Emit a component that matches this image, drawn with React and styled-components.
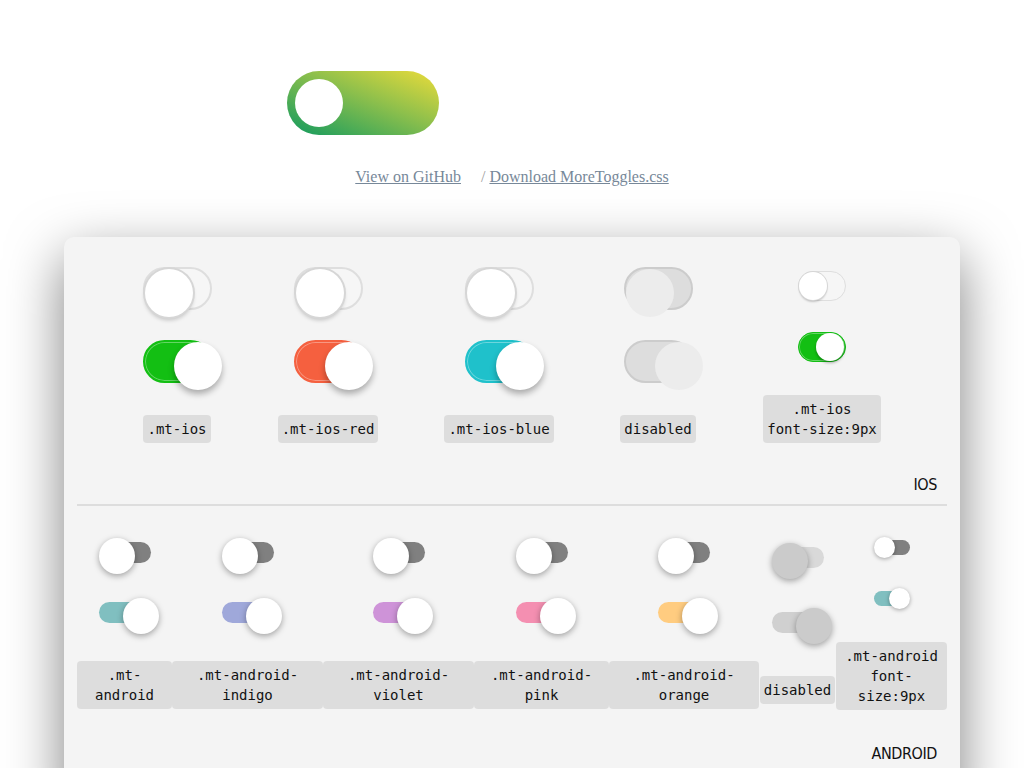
import React from 'react';
import styled, { createGlobalStyle } from 'styled-components';

const GlobalStyle = createGlobalStyle`
  html, body { margin: 0; padding: 0; background: #fff; }
  body { font-family: "Liberation Serif", "Times New Roman", serif; }
`;

const Page = styled.div`
  padding-top: 71px;
`;

const Hero = styled.div`
  padding-left: calc(50% - 225px);
`;

const HeroToggle = styled.div`
  width: 152px;
  height: 64px;
  border-radius: 32px;
  box-sizing: border-box;
  padding-left: 8px;
  display: flex;
  align-items: center;
  background: linear-gradient(to top right, #119a5f 0%, #8cbf4c 55%, #ecdc3a 100%);
`;

const HeroKnob = styled.div`
  width: 48px;
  height: 48px;
  border-radius: 50%;
  background: #fff;
`;

const Links = styled.div`
  margin-top: 33px;
  text-align: center;
  font-size: 16px;
  line-height: 18px;
  color: #a0a0a0;
`;

const Link = styled.a`
  color: #778899;
  text-decoration: underline;
`;

const Sep = styled.span`
  margin-left: 20px;
  margin-right: 4px;
`;

const Card = styled.div`
  margin: 51px 64px 0;
  background: #f4f4f4;
  border-radius: 10px;
  box-shadow: 0 20px 55px rgba(0, 0, 0, 0.5);
  padding: 30px 13px 40px;
`;

const Grid = styled.div`
  display: grid;
  grid-template-columns: ${(p) => p.$cols};
  align-items: ${(p) => p.$align};
  margin-top: ${(p) => p.$mt || 0}px;
`;

const Cell = styled.div`
  display: flex;
  flex-direction: column;
  align-items: center;
  min-width: 0;
  gap: ${(p) => p.$labelGap}px;
`;

const Pair = styled.div`
  display: flex;
  flex-direction: column;
  align-items: center;
  gap: ${(p) => p.$gap}px;
`;

const Code = styled.code`
  display: inline-block;
  box-sizing: border-box;
  max-width: 100%;
  padding: 4px;
  background: #dddddd;
  border-radius: 4px;
  font-family: "DejaVu Sans Mono", "Liberation Mono", monospace;
  font-size: 14px;
  line-height: 20px;
  color: #111;
  text-align: center;
`;

const SectionTitle = styled.div`
  margin-top: ${(p) => p.$mt}px;
  text-align: right;
  padding-right: 10px;
  font-family: "DejaVu Sans Condensed", "DejaVu Sans", sans-serif;
  font-stretch: semi-condensed;
  font-size: 16px;
  line-height: 20px;
  letter-spacing: -0.4px;
  color: #111;
`;

const Divider = styled.div`
  margin-top: 9px;
  height: 2px;
  background: #dddddd;
`;

/* ---------- iOS toggle ---------- */

const IosTrack = styled.div`
  position: relative;
  box-sizing: border-box;
  width: ${(p) => (p.$small ? 48 : 69)}px;
  height: ${(p) => (p.$small ? 30 : 43)}px;
  border-radius: 999px;
  border: ${(p) => (p.$small ? 1.5 : 2)}px solid
    ${(p) => (p.$disabled ? '#cccccc' : p.$on ? p.$color : '#dedede')};
  background: ${(p) => (p.$disabled ? '#dddddd' : p.$on ? p.$color : '#f6f6f6')};
  box-shadow: ${(p) => (p.$on && !p.$disabled ? 'inset 0 0 0 1px rgba(255,255,255,0.35)' : 'none')};
`;

const IosKnob = styled.div`
  position: absolute;
  border-radius: 50%;
  width: ${(p) => (p.$small ? 28 : 48)}px;
  height: ${(p) => (p.$small ? 28 : 48)}px;
  top: ${(p) => (p.$small ? -0.5 : 0)}px;
  left: ${(p) => (p.$on ? (p.$small ? 17 : 29) : p.$small ? -0.5 : 0)}px;
  background: ${(p) => (p.$disabled ? '#ececec' : '#fff')};
  box-shadow: ${(p) =>
    p.$disabled
      ? 'none'
      : p.$on
      ? p.$small
        ? '0 2px 3px rgba(0,0,0,0.3)'
        : '0 4px 6px rgba(0,0,0,0.3)'
      : p.$small
      ? '0 0 0 1px #d6d6d6, 0 2px 2px rgba(0,0,0,0.2)'
      : '0 0 0 2px #d6d6d6, 0 3px 4px rgba(0,0,0,0.22)'};
`;

const IosToggle = ({ on, color, small, disabled }) => (
  <IosTrack $on={on} $color={color} $small={small} $disabled={disabled}>
    <IosKnob $on={on} $small={small} $disabled={disabled} />
  </IosTrack>
);

/* ---------- Android toggle ---------- */

const A_NORMAL = { w: 52, k: 36, tw: 48, th: 21, tt: 4, offLeft: 4, onKnob: 24 };
const A_SMALL = { w: 36, k: 21, tw: 34, th: 15, tt: 3, offLeft: 2, onKnob: 15 };

const AndroidSwitch = styled.div`
  position: relative;
  width: ${(p) => p.$g.w}px;
  height: ${(p) => p.$g.k}px;
`;

const AndroidTrack = styled.div`
  position: absolute;
  top: ${(p) => p.$g.tt}px;
  left: ${(p) => (p.$on ? 0 : p.$g.offLeft)}px;
  width: ${(p) => p.$g.tw}px;
  height: ${(p) => p.$g.th}px;
  border-radius: 999px;
  background: ${(p) => (p.$disabled ? (p.$on ? '#d0d0d0' : '#d9d9d9') : p.$on ? p.$color : '#808080')};
`;

const AndroidKnob = styled.div`
  position: absolute;
  top: 0;
  left: ${(p) => (p.$on ? p.$g.onKnob : 0)}px;
  width: ${(p) => p.$g.k}px;
  height: ${(p) => p.$g.k}px;
  border-radius: 50%;
  background: ${(p) => (p.$disabled ? '#cbcbcb' : '#fff')};
  box-shadow: ${(p) => (p.$small ? '0 1px 4px rgba(0,0,0,0.35)' : '0 2px 6px rgba(0,0,0,0.35)')};
`;

const AndroidToggle = ({ on, color, small, disabled }) => {
  const g = small ? A_SMALL : A_NORMAL;
  return (
    <AndroidSwitch $g={g}>
      <AndroidTrack $g={g} $on={on} $color={color} $disabled={disabled} />
      <AndroidKnob $g={g} $on={on} $small={small} $disabled={disabled} />
    </AndroidSwitch>
  );
};

/* ---------- data ---------- */

const iosItems = [
  { label: '.mt-ios', color: '#13bf13' },
  { label: '.mt-ios-red', color: '#f5603f' },
  { label: '.mt-ios-blue', color: '#1fc1cb' },
  { label: 'disabled', disabled: true },
  { label: ['.mt-ios', 'font-size:9px'], color: '#13bf13', small: true },
];

const androidItems = [
  { label: '.mt-android', color: '#80bfc0' },
  { label: '.mt-android-indigo', color: '#9fa8da' },
  { label: '.mt-android-violet', color: '#ce93d8' },
  { label: '.mt-android-pink', color: '#f48fb1' },
  { label: '.mt-android-orange', color: '#ffcc80' },
  { label: 'disabled', disabled: true },
  { label: ['.mt-android', 'font-size:9px'], color: '#80bfc0', small: true },
];

const renderLabel = (label) =>
  Array.isArray(label) ? (
    <>
      {label[0]}
      <br />
      {label[1]}
    </>
  ) : (
    label
  );

export default function App() {
  return (
    <>
      <GlobalStyle />
      <Page>
        <Hero>
          <HeroToggle>
            <HeroKnob />
          </HeroToggle>
        </Hero>
        <Links>
          <Link href="#">View on GitHub</Link>
          <Sep>/</Sep>
          <Link href="#">Download MoreToggles.css</Link>
        </Links>
        <Card>
          <Grid $cols="200px 102px 240px 78px 250px" $align="end">
            {iosItems.map((it, i) => (
              <Cell key={i} $labelGap={it.small ? 33 : 32}>
                <Pair $gap={it.small ? 31 : 30}>
                  <IosToggle on={false} small={it.small} disabled={it.disabled} />
                  <IosToggle on color={it.color} small={it.small} disabled={it.disabled} />
                </Pair>
                <Code>{renderLabel(it.label)}</Code>
              </Cell>
            ))}
          </Grid>
          <SectionTitle $mt={32}>IOS</SectionTitle>
          <Divider />
          <Grid $cols="95px 151px 151px 135px 150px 77px 111px" $align="center" $mt={31}>
            {androidItems.map((it, i) => (
              <Cell key={i} $labelGap={it.small ? 33 : it.disabled ? 32 : 27}>
                <Pair $gap={it.small ? 30 : it.disabled ? 29 : 24}>
                  <AndroidToggle on={false} small={it.small} disabled={it.disabled} />
                  <AndroidToggle on color={it.color} small={it.small} disabled={it.disabled} />
                </Pair>
                <Code>{renderLabel(it.label)}</Code>
              </Cell>
            ))}
          </Grid>
          <SectionTitle $mt={34}>ANDROID</SectionTitle>
        </Card>
      </Page>
    </>
  );
}
